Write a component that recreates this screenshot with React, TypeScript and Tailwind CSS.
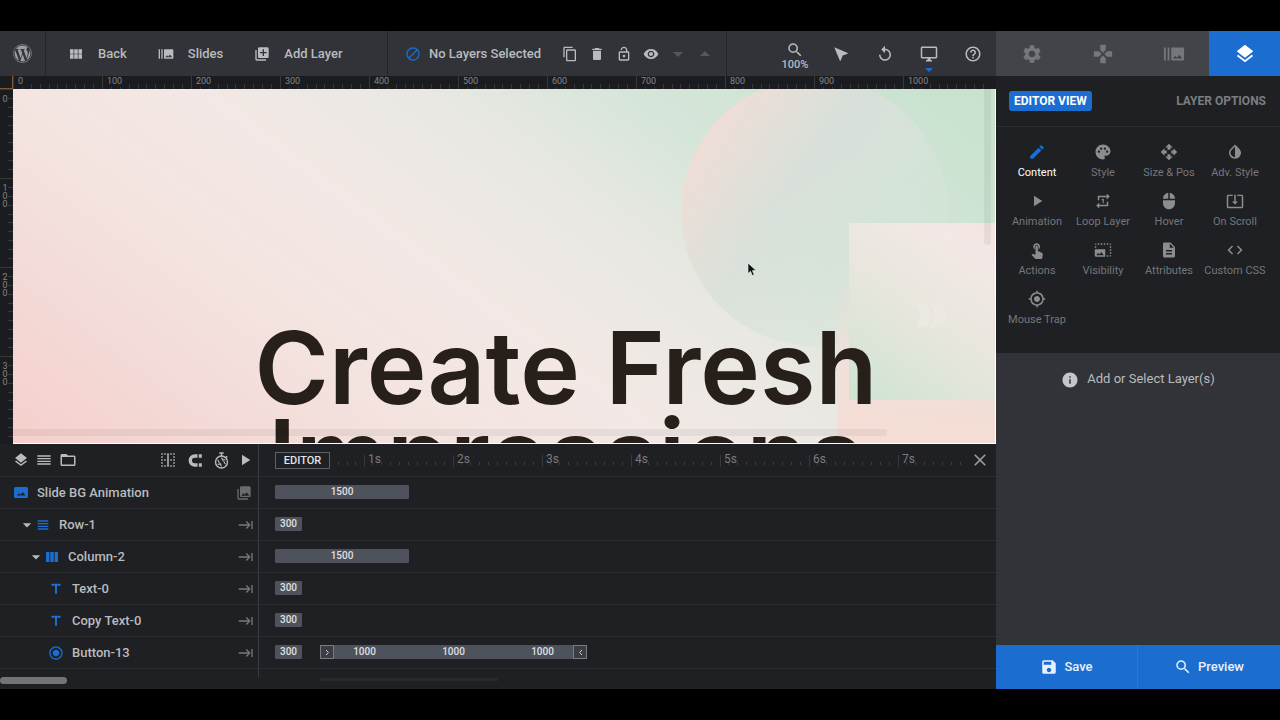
import type { ReactNode } from "react";
import type { IconType } from "react-icons";
import { FaWordpress } from "react-icons/fa";
import {
  MdArrowDropDown,
  MdArrowDropUp,
  MdBorderVertical,
  MdBurstMode,
  MdClose,
  MdCode,
  MdContentCopy,
  MdDescription,
  MdEdit,
  MdFolderOpen,
  MdGamepad,
  MdGpsFixed,
  MdHelpOutline,
  MdInfo,
  MdInvertColors,
  MdKeyboardTab,
  MdLayers,
  MdLibraryAdd,
  MdMouse,
  MdNotInterested,
  MdOpenWith,
  MdOutlineLockOpen,
  MdPalette,
  MdPhotoLibrary,
  MdPhotoSizeSelectLarge,
  MdPlayArrow,
  MdRadioButtonChecked,
  MdRepeatOne,
  MdReplay,
  MdSave,
  MdSearch,
  MdSettings,
  MdSystemUpdateAlt,
  MdTitle,
  MdTouchApp,
  MdViewHeadline,
  MdViewModule,
  MdVisibility,
} from "react-icons/md";

const PX_PER_SECOND = 89;
const MINOR_TICKS = [1, 2, 3, 4, 5, 6, 7, 8, 9];
const COLUMNS = [0, 100, 200, 300, 400, 500, 600, 700, 800, 900, 1000];
const ROWS = [0, 100, 200, 300];
const SECONDS = [1, 2, 3, 4, 5, 6, 7];

type LayerRow = {
  name: string;
  indent: string;
  icon: ReactNode;
  open?: boolean;
  background?: boolean;
  duration: number;
  loop?: number[];
};

const layerRows: LayerRow[] = [
  {
    name: "Slide BG Animation",
    indent: "pl-[13px]",
    icon: <PanoramaIcon />,
    background: true,
    duration: 1500,
  },
  {
    name: "Row-1",
    indent: "pl-[19px]",
    icon: <MdViewHeadline className="h-4 w-4" />,
    open: true,
    duration: 300,
  },
  {
    name: "Column-2",
    indent: "pl-7",
    icon: <ColumnsIcon />,
    open: true,
    duration: 1500,
  },
  {
    name: "Text-0",
    indent: "pl-12",
    icon: <MdTitle className="h-4 w-4" />,
    duration: 300,
  },
  {
    name: "Copy Text-0",
    indent: "pl-12",
    icon: <MdTitle className="h-4 w-4" />,
    duration: 300,
  },
  {
    name: "Button-13",
    indent: "pl-12",
    icon: <MdRadioButtonChecked className="h-4 w-4" />,
    duration: 300,
    loop: [1000, 1000, 1000],
  },
];

const panelItems: { icon: IconType; label: string; active?: boolean }[] = [
  { icon: MdEdit, label: "Content", active: true },
  { icon: MdPalette, label: "Style" },
  { icon: MdOpenWith, label: "Size & Pos" },
  { icon: MdInvertColors, label: "Adv. Style" },
  { icon: MdPlayArrow, label: "Animation" },
  { icon: MdRepeatOne, label: "Loop Layer" },
  { icon: MdMouse, label: "Hover" },
  { icon: MdSystemUpdateAlt, label: "On Scroll" },
  { icon: MdTouchApp, label: "Actions" },
  { icon: MdPhotoSizeSelectLarge, label: "Visibility" },
  { icon: MdDescription, label: "Attributes" },
  { icon: MdCode, label: "Custom CSS" },
  { icon: MdGpsFixed, label: "Mouse Trap" },
];

export default function App() {
  return (
    <div className="flex h-screen min-h-[560px] bg-black py-[31px] font-['Roboto',sans-serif] text-[#b9bbbe]">
      <main className="flex min-w-0 flex-1 flex-col bg-[#1e2023]">
        <Toolbar />
        <HorizontalRuler />
        <div className="flex min-h-0 flex-1">
          <VerticalRuler />
          <SlideCanvas />
        </div>
        <Timeline />
      </main>
      <SidePanel />
    </div>
  );
}

function Toolbar() {
  return (
    <header className="flex h-[45px] shrink-0 bg-[#313338] text-[13px] font-medium">
      <button
        aria-label="WordPress"
        className="flex w-[46px] items-center justify-center border-r border-[#232529] text-[#9b9da1]"
      >
        <FaWordpress className="h-[19px] w-[19px]" />
      </button>

      <nav className="flex flex-1 items-center gap-[31px] border-r border-[#232529] pl-[22px] whitespace-nowrap">
        <ToolbarButton icon={MdViewModule} label="Back" />
        <ToolbarButton icon={MdBurstMode} label="Slides" />
        <ToolbarButton icon={MdLibraryAdd} label="Add Layer" />
      </nav>

      <div className="flex w-[339px] shrink-0 items-center border-r border-[#232529] pl-[17px]">
        <MdNotInterested className="h-4 w-4 -scale-x-100 text-[#1b6dd0]" />
        <span className="ml-2 flex-1 whitespace-nowrap">No Layers Selected</span>
        <div className="mr-2 flex">
          <ToolButton label="Copy">
            <MdContentCopy className="h-4 w-4" />
          </ToolButton>
          <ToolButton label="Delete">
            <TrashIcon />
          </ToolButton>
          <ToolButton label="Lock">
            <MdOutlineLockOpen className="h-4 w-4" />
          </ToolButton>
          <ToolButton label="Show or hide">
            <MdVisibility className="h-4 w-4" />
          </ToolButton>
          <ToolButton label="Move down" dim>
            <MdArrowDropDown className="h-6 w-6" />
          </ToolButton>
          <ToolButton label="Move up" dim>
            <MdArrowDropUp className="h-6 w-6" />
          </ToolButton>
        </div>
      </div>

      <div className="flex w-[269px] shrink-0 items-stretch justify-end pr-px">
        <button className="flex w-12 flex-col items-center justify-center pt-1 text-[11px] leading-3">
          <MdSearch className="h-[18px] w-[18px] shrink-0" />
          100%
        </button>
        <ViewButton label="Select">
          <PointerIcon />
        </ViewButton>
        <ViewButton label="Undo">
          <MdReplay className="h-[18px] w-[18px]" />
        </ViewButton>
        <ViewButton label="Device">
          <DesktopIcon />
          <span className="absolute bottom-1 left-1/2 h-1 w-2 -translate-x-1/2 bg-[#1b6dd0] [clip-path:polygon(0_0,100%_0,50%_100%)]" />
        </ViewButton>
        <ViewButton label="Help">
          <MdHelpOutline className="h-[18px] w-[18px]" />
        </ViewButton>
      </div>
    </header>
  );
}

function ToolbarButton({ icon: Icon, label }: { icon: IconType; label: string }) {
  return (
    <button className="flex items-center gap-3.5">
      <Icon className="h-4 w-4" />
      {label}
    </button>
  );
}

function ToolButton({
  label,
  dim,
  children,
}: {
  label: string;
  dim?: boolean;
  children: ReactNode;
}) {
  return (
    <button
      aria-label={label}
      className={[
        "flex h-8 w-[27px] items-center justify-center",
        dim ? "text-[#55585d]" : "text-[#b9bbbe]",
      ].join(" ")}
    >
      {children}
    </button>
  );
}

function ViewButton({ label, children }: { label: string; children: ReactNode }) {
  return (
    <button aria-label={label} className="relative flex w-11 items-center justify-center">
      {children}
    </button>
  );
}

function HorizontalRuler() {
  return (
    <div className="flex h-[13px] shrink-0 overflow-hidden bg-[#1b1c1f]">
      <div className="w-[13px] shrink-0 border-r border-b border-[#7d5a33]" />
      {COLUMNS.map((column) => (
        <div
          key={column}
          className="relative flex w-[89px] shrink-0 items-end justify-evenly border-l border-[#36383c]"
        >
          {MINOR_TICKS.map((tick) => (
            <span key={tick} className="h-[5px] w-px bg-[#36383c]" />
          ))}
          <span className="absolute top-0 left-0.5 bg-[#1b1c1f] pl-0.5 text-[9px] leading-[11px] text-[#84868a]">
            {column}
          </span>
        </div>
      ))}
    </div>
  );
}

function VerticalRuler() {
  return (
    <div className="w-[13px] shrink-0 overflow-hidden bg-[#1b1c1f]">
      {ROWS.map((row) => (
        <div
          key={row}
          className="relative flex h-[89px] flex-col items-end justify-evenly border-t border-[#36383c]"
        >
          {MINOR_TICKS.map((tick) => (
            <span key={tick} className="h-px w-[5px] bg-[#36383c]" />
          ))}
          <span className="absolute top-[5px] left-0.5 w-1.5 text-center text-[9px] leading-2 break-all text-[#84868a]">
            {row}
          </span>
        </div>
      ))}
    </div>
  );
}

function SlideCanvas() {
  return (
    <section className="relative min-w-0 flex-1 overflow-hidden border-r border-b border-white bg-[#f1e7e4]">
      <div className="h-full w-[1106px] min-w-full bg-[linear-gradient(37deg,#f5cfcc_0%,#f3dcd8_17%,#f4e5e1_30%,#f2e8e5_42%,#eae8e3_55%,#d5e5d9_69%,#c8e2ce_90%)]">
        <SlideShapes />
        <h1 className="relative pt-[234px] text-center font-['Inter',sans-serif] text-[101px] leading-[88px] font-semibold text-[#271f1a]">
          Create Fresh
          <br />
          Impressions
        </h1>
      </div>
      <div className="absolute bottom-[7px] left-0 h-[7px] w-[89%] rounded-r bg-black/5" />
      <div className="absolute top-0 right-1 h-[156px] w-[7px] rounded-b bg-black/5" />
      <svg
        className="absolute top-[173px] left-[734px] h-[15px] w-[11px]"
        viewBox="0 0 11 15"
        aria-hidden="true"
      >
        <path
          d="M1 1v10.5l2.5-2.2 1.8 4.2 1.9-.8-1.8-4.1H9z"
          fill="#111"
          stroke="#f4f4f4"
          strokeWidth=".6"
        />
      </svg>
    </section>
  );
}

function SlideShapes() {
  return (
    <svg className="absolute top-0 left-0" width="1106" height="355" aria-hidden="true">
      <defs>
        <linearGradient id="disc" x1="0" y1=".2" x2=".85" y2=".75">
          <stop offset="0" stopColor="#f4dcd4" />
          <stop offset=".2" stopColor="#e7dfd8" />
          <stop offset=".45" stopColor="#d8e0d9" />
          <stop offset="1" stopColor="#d3e4d8" />
        </linearGradient>
        <linearGradient id="discFade" x1="0" y1="0" x2=".6" y2="1">
          <stop offset=".5" stopColor="white" />
          <stop offset="1" stopColor="#555" />
        </linearGradient>
        <mask id="discMask">
          <circle cx="802" cy="123" r="134" fill="url(#discFade)" />
        </mask>
        <linearGradient id="card" x1="0" y1="1" x2=".8" y2="0">
          <stop offset="0" stopColor="#cde3d2" />
          <stop offset=".45" stopColor="#e7e6dc" />
          <stop offset=".8" stopColor="#f2e8e5" />
          <stop offset="1" stopColor="#f4e3e1" />
        </linearGradient>
        <linearGradient id="coral" x1="0" y1="0" x2="0" y2="1">
          <stop offset="0" stopColor="#f5ddd5" stopOpacity="0" />
          <stop offset=".7" stopColor="#f5ddd5" stopOpacity=".8" />
          <stop offset="1" stopColor="#f5ddd5" />
        </linearGradient>
      </defs>
      <circle cx="802" cy="123" r="134" fill="url(#disc)" mask="url(#discMask)" />
      <rect x="824" y="180" width="282" height="175" fill="url(#coral)" />
      <rect x="836" y="134" width="200" height="177" fill="url(#card)" />
      <g fill="#f6efec" opacity=".35">
        <path d="M903 214h11l5 12-5 12h-11l5-12z" />
        <path d="M917 214h11l7 12-7 12h-11l5-12z" />
      </g>
    </svg>
  );
}

function Timeline() {
  return (
    <section className="shrink-0 text-[13px] font-medium">
      <div className="flex h-8">
        <div className="flex w-[259px] shrink-0 items-center border-r border-[#3a3c41] pl-[13px]">
          <div className="flex flex-1 items-center gap-[7px]">
            <IconButton label="Layers">
              <MdLayers className="h-4 w-4" />
            </IconButton>
            <IconButton label="List">
              <MdViewHeadline className="h-4 w-4 scale-x-125" />
            </IconButton>
            <IconButton label="Folder">
              <MdFolderOpen className="h-[18px] w-[18px]" />
            </IconButton>
          </div>
          <div className="flex items-center gap-[11px] pr-1">
            <IconButton label="Snap">
              <MdBorderVertical className="h-[18px] w-[18px]" />
            </IconButton>
            <IconButton label="Magnet">
              <MagnetIcon />
            </IconButton>
            <IconButton label="Speed">
              <StopwatchIcon />
            </IconButton>
            <IconButton label="Play">
              <MdPlayArrow className="-ml-1 h-[18px] w-[18px]" />
            </IconButton>
          </div>
        </div>

        <div className="flex min-w-0 flex-1 pl-4">
          <div className="flex min-w-0 flex-1 overflow-hidden">
            <div className="flex w-[89px] shrink-0 items-center">
              <button className="h-[17px] w-[55px] border border-[#5d6065] text-[11px] leading-[15px] text-[#e2e3e5]">
                EDITOR
              </button>
              <div className="flex flex-1 items-end justify-evenly self-stretch pb-[11px]">
                <span className="h-[3px] w-px bg-[#3a3c40]" />
                <span className="h-[3px] w-px bg-[#3a3c40]" />
                <span className="h-[3px] w-px bg-[#3a3c40]" />
              </div>
            </div>
            {SECONDS.map((second) => (
              <div
                key={second}
                className="relative my-[7px] flex w-[89px] shrink-0 items-end justify-evenly pb-1"
              >
                <span className="absolute top-1 left-0 h-3 w-px bg-[#36383c]" />
                {MINOR_TICKS.map((tick) => (
                  <span key={tick} className="h-[3px] w-px bg-[#3a3c40]" />
                ))}
                <span className="absolute top-0 left-1 text-[12px] leading-4 font-normal text-[#797b7f]">
                  {second}s
                </span>
              </div>
            ))}
          </div>
          <button
            aria-label="Close timeline"
            className="flex w-8 shrink-0 items-center justify-center text-[#96989c]"
          >
            <MdClose className="h-5 w-5" />
          </button>
        </div>
      </div>

      {layerRows.map((row) => (
        <TimelineRow key={row.name} {...row} />
      ))}

      <div className="flex h-[21px] border-t border-[#2b2d31]">
        <div className="h-2 w-[259px] shrink-0 border-r border-[#3a3c41]">
          <div className="mt-2 h-[7px] w-[67px] rounded-full bg-[#737477]" />
        </div>
        <div className="mt-[9px] ml-[61px] h-[3px] w-[178px] bg-[#27292c]" />
      </div>
    </section>
  );
}

function TimelineRow({ name, indent, icon, open, background, duration, loop }: LayerRow) {
  return (
    <div className="flex h-8 border-t border-[#2b2d31]">
      <div
        className={[
          "flex w-[259px] shrink-0 items-center border-r border-[#3a3c41] pr-1",
          indent,
        ].join(" ")}
      >
        {open && <MdArrowDropDown className="h-4 w-4 scale-125" />}
        <span className="flex w-4 justify-center text-[#1b6dd0]">{icon}</span>
        <span className="ml-2 flex-1 whitespace-nowrap">{name}</span>
        {background ? (
          <MdPhotoLibrary className="mr-0.5 h-4 w-4 text-[#696b6f]" />
        ) : (
          <MdKeyboardTab className="h-4 w-4 text-[#77797d]" />
        )}
      </div>

      <div className="flex min-w-0 flex-1 items-center overflow-hidden pb-px pl-4">
        <div
          className="h-3.5 shrink-0 rounded-[1px] bg-[#4e525c] text-center text-[10px] leading-[14px] text-[#dfe0e3]"
          style={{ width: Math.round((duration / 1000) * PX_PER_SECOND) }}
        >
          {duration}
        </div>
        {loop && (
          <div className="relative ml-[18px] flex h-3.5 shrink-0 bg-[#4e525c] text-center text-[10px] leading-[14px] text-[#dfe0e3]">
            {loop.map((ms, i) => (
              <span key={i} style={{ width: (ms / 1000) * PX_PER_SECOND }}>
                {ms}
              </span>
            ))}
            <LoopCap side="left" />
            <LoopCap side="right" />
          </div>
        )}
      </div>
    </div>
  );
}

function LoopCap({ side }: { side: "left" | "right" }) {
  return (
    <span
      className={[
        "absolute inset-y-0 flex w-3.5 items-center justify-center border border-[#797b80] bg-[#3a3d43]",
        side === "left" ? "left-0" : "right-0",
      ].join(" ")}
    >
      <svg className="h-[7px] w-[5px]" viewBox="0 0 5 7" fill="none" stroke="#c9cacd">
        <path d={side === "left" ? "M1 1l2.5 2.5L1 6" : "M4 1L1.5 3.5 4 6"} />
      </svg>
    </span>
  );
}

function IconButton({ label, children }: { label: string; children: ReactNode }) {
  return (
    <button aria-label={label} className="flex items-center justify-center">
      {children}
    </button>
  );
}

function SidePanel() {
  return (
    <aside className="flex w-[284px] shrink-0 flex-col bg-[#313338]">
      <div className="grid h-[45px] shrink-0 grid-cols-4 bg-[#414449] text-[#74777c]">
        <PanelTab icon={MdSettings} label="Module settings" />
        <PanelTab icon={MdGamepad} label="Navigation" />
        <PanelTab icon={MdBurstMode} label="Slide options" />
        <PanelTab icon={MdLayers} label="Layer options" active />
      </div>

      <div className="flex h-[51px] shrink-0 items-center justify-between border-b border-[#2b2d31] bg-[#1e2023] pr-3.5 pl-[13px] text-[12px] font-bold">
        <button className="h-5 rounded-[3px] bg-[#1b6dd0] px-[5px] text-white">
          EDITOR VIEW
        </button>
        <button className="text-[#7b7d81]">LAYER OPTIONS</button>
      </div>

      <div className="grid shrink-0 grid-cols-4 gap-y-[11px] bg-[#1e2023] pt-4 pr-3 pb-[25px] pl-2">
        {panelItems.map(({ icon: Icon, label, active }) => (
          <button
            key={label}
            className={[
              "flex flex-col items-center gap-1 text-[11px] leading-4 whitespace-nowrap",
              active ? "text-white" : "text-[#75777b]",
            ].join(" ")}
          >
            <Icon
              className={[
                "h-[18px] w-[18px]",
                active ? "text-[#1b6dd0]" : "text-[#8b8d91]",
              ].join(" ")}
            />
            {label}
          </button>
        ))}
      </div>

      <div className="flex flex-1 items-start justify-center gap-2 pt-[18px] text-[13px] leading-4">
        <MdInfo className="h-[18px] w-[18px] text-[#c4c6c9]" />
        Add or Select Layer(s)
      </div>

      <div className="grid h-11 shrink-0 grid-cols-2 bg-[#1b6dd0] text-[13px] font-medium text-[#e8f0fa]">
        <button className="flex items-center justify-center gap-1.5 border-r border-[#2a78d6]">
          <MdSave className="h-[18px] w-[18px]" />
          Save
        </button>
        <button className="flex items-center justify-center gap-1.5">
          <MdSearch className="h-[18px] w-[18px]" />
          Preview
        </button>
      </div>
    </aside>
  );
}

function PanelTab({
  icon: Icon,
  label,
  active,
}: {
  icon: IconType;
  label: string;
  active?: boolean;
}) {
  return (
    <button
      aria-label={label}
      className={[
        "flex items-center justify-center",
        active ? "bg-[#1b6dd0] text-white" : "",
      ].join(" ")}
    >
      <Icon className="h-[22px] w-[22px]" />
    </button>
  );
}

function TrashIcon() {
  return (
    <svg className="h-4 w-4" viewBox="0 0 24 24" fill="currentColor" aria-hidden="true">
      <path d="M6 19c0 1.1.9 2 2 2h8c1.1 0 2-.9 2-2V7H6v12zM19 4h-3.5l-1-1h-5l-1 1H5v2h14V4z" />
    </svg>
  );
}

function PointerIcon() {
  return (
    <svg className="h-[18px] w-[18px]" viewBox="0 0 24 24" fill="currentColor" aria-hidden="true">
      <path d="M3 3l18 7.53v.98l-6.84 2.65L11.52 21h-.98L3 3z" />
    </svg>
  );
}

function DesktopIcon() {
  return (
    <svg className="h-[18px] w-[18px]" viewBox="0 0 24 24" fill="currentColor" aria-hidden="true">
      <path d="M21 2H3c-1.1 0-2 .9-2 2v12c0 1.1.9 2 2 2h7v2H8v2h8v-2h-2v-2h7c1.1 0 2-.9 2-2V4c0-1.1-.9-2-2-2zm0 14H3V4h18v12z" />
    </svg>
  );
}

function PanoramaIcon() {
  return (
    <svg className="h-3 w-4 shrink-0" viewBox="0 0 16 12" aria-hidden="true">
      <rect x="1" width="14" height="11" rx="1.5" fill="currentColor" />
      <path d="M4 8.5l2-2.3 1.6 1.6L9.8 5l2.6 3.5z" fill="#1e2023" />
    </svg>
  );
}

function ColumnsIcon() {
  return (
    <svg className="h-2.5 w-3 shrink-0" viewBox="0 0 12 10" aria-hidden="true">
      <path d="M0 0h3.4v10H0zM4.3 0h3.4v10H4.3zM8.6 0H12v10H8.6z" fill="currentColor" />
    </svg>
  );
}

function MagnetIcon() {
  return (
    <svg className="h-[15px] w-[15px]" viewBox="0 0 15 15" aria-hidden="true">
      <path d="M9.5 3H6.8a4.5 4.5 0 000 9h2.7" fill="none" stroke="currentColor" strokeWidth="3.4" />
      <path d="M10.8 1.3h3v3.4h-3zM10.8 10.3h3v3.4h-3z" fill="currentColor" />
    </svg>
  );
}

function StopwatchIcon() {
  return (
    <svg
      className="h-[17px] w-[15px]"
      viewBox="0 0 15 17"
      fill="none"
      stroke="currentColor"
      strokeWidth="1.4"
      aria-hidden="true"
    >
      <circle cx="7.5" cy="10" r="6" />
      <path d="M5.3 1h4.4M7.5 1v3M12 4.2l1.3 1.3" />
      <path
        d="M7.5 5.5l1.8 3.2M11.4 7.8l-3.7.1M11.4 12.2l-1.8-3.1M7.5 14.5l-1.8-3.2M3.6 12.2l3.7-.1M3.6 7.8l1.8 3.1"
        strokeWidth="1.1"
      />
    </svg>
  );
}
